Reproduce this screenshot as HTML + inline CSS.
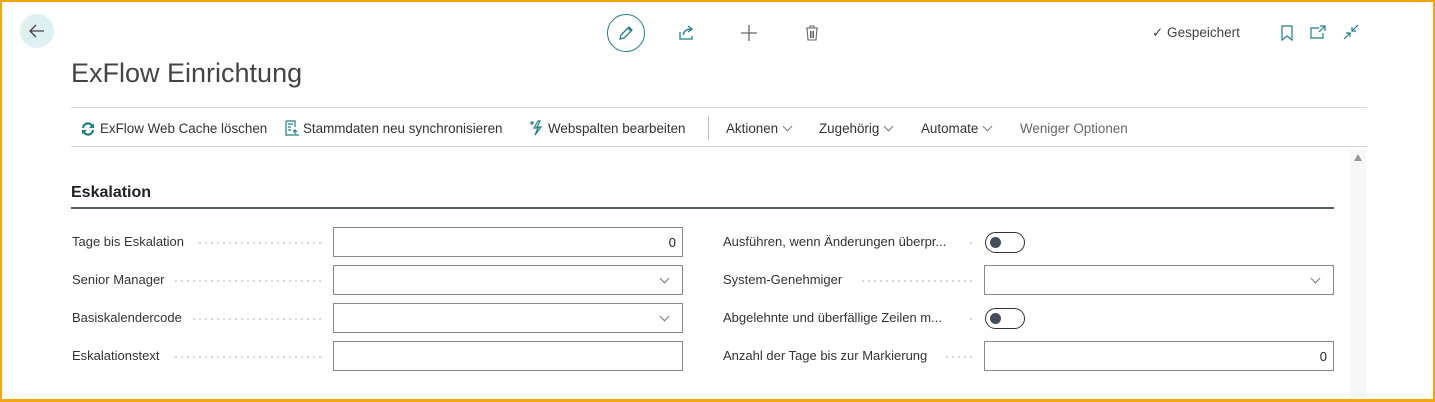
<!DOCTYPE html><html><head><style>
*{margin:0;padding:0;box-sizing:border-box}
body{width:1435px;height:402px;overflow:hidden;background:#fff;font-family:"Liberation Sans",sans-serif;color:#212121;position:relative}
.frame{position:absolute;left:0;top:0;width:1435px;height:402px;border:2px solid #f2a50c;border-bottom-width:3px}
.a{position:absolute;white-space:nowrap}
.lbl{font-size:13px;color:#333}
.dots{position:absolute;height:2px;background:radial-gradient(circle,#c8c8c8 0.8px,transparent 1px) 0 0/6px 2px repeat-x}
.inp{position:absolute;border:1px solid #8a8a8a;height:30px;width:350px;background:#fff;font-size:13px;text-align:right;padding:7px 6px 0 0}
.tog{position:absolute;width:40px;height:21px;border:1px solid #333;border-radius:11px}
.tog:after{content:"";position:absolute;left:4px;top:4px;width:11px;height:11px;border-radius:50%;background:#444d5c}
.tb{font-size:13.4px;color:#333;top:121px}
.chev{display:inline-block;width:7px;height:7px;border-right:1px solid #777;border-bottom:1px solid #777;transform:rotate(45deg);margin:0 4px 3px 6px}
</style></head><body>
<div class="a" style="left:20px;top:14px;width:34px;height:34px;border-radius:50%;background:#dff0f2"></div>
<svg class="a" style="left:28px;top:22px" width="18" height="18" viewBox="0 0 18 18"><path d="M16 9H2M8 3L2 9l6 6" fill="none" stroke="#444" stroke-width="1.3"/></svg>
<div class="a" style="left:607px;top:14px;width:38px;height:38px;border-radius:50%;border:1.5px solid #1f7f86"></div>
<svg class="a" style="left:617px;top:24px" width="18" height="18" viewBox="0 0 18 18"><path d="M3 15l1-4 8-8 3 3-8 8z M11 4l3 3" fill="none" stroke="#1f7f86" stroke-width="1.3"/></svg>
<svg class="a" style="left:678px;top:24px" width="18" height="18" viewBox="0 0 18 18"><path d="M2 8v7h12v-3M5 11c1-4 4-6 8-6M10 2l4 3-4 3" fill="none" stroke="#1f7f86" stroke-width="1.3"/></svg>
<svg class="a" style="left:740px;top:24px" width="18" height="18" viewBox="0 0 18 18"><path d="M9 1v16M1 9h16" stroke="#666" stroke-width="1.3"/></svg>
<svg class="a" style="left:803px;top:24px" width="18" height="18" viewBox="0 0 18 18"><path d="M3 4h12M7 4V2h4v2M4 4l1 12h8l1-12M7.5 7v7M9 7v7M10.5 7v7" fill="none" stroke="#666" stroke-width="1.1"/></svg>
<div class="a" style="left:1152px;top:25px;font-size:13.5px;color:#444">✓ Gespeichert</div>
<svg class="a" style="left:1278px;top:24px" width="18" height="18" viewBox="0 0 18 18"><path d="M4 2h10v14l-5-4-5 4z" fill="none" stroke="#1f7f86" stroke-width="1.2"/></svg>
<svg class="a" style="left:1309px;top:24px" width="18" height="18" viewBox="0 0 18 18"><path d="M10 4H2v10h12V9M11 2h5v5M16 2l-6 6" fill="none" stroke="#1f7f86" stroke-width="1.2"/></svg>
<svg class="a" style="left:1342px;top:23px" width="18" height="18" viewBox="0 0 18 18"><path d="M2 16l6-6M4 10h4v4M16 2l-6 6M10 4v4h4" fill="none" stroke="#1f7f86" stroke-width="1.2"/></svg>
<div class="a" style="left:71px;top:58px;font-size:27px;color:#444;font-weight:300">ExFlow Einrichtung</div>
<div class="a" style="left:71px;top:107px;width:1296px;height:1px;background:#d6d6d6"></div>
<div class="a" style="left:71px;top:146px;width:1296px;height:1px;background:#d6d6d6"></div>
<svg class="a" style="left:80px;top:121px" width="16" height="16" viewBox="0 0 16 16"><path d="M2 7a6 6 0 0 1 11-3l1-2v5h-5l2-2a4 4 0 0 0-7 2zM14 9a6 6 0 0 1-11 3l-1 2V9h5l-2 2a4 4 0 0 0 7-2z" fill="#1f7f86"/></svg>
<div class="a tb" style="left:100px">ExFlow Web Cache löschen</div>
<svg class="a" style="left:284px;top:120px" width="16" height="16" viewBox="0 0 16 16"><path d="M2 1h9v6M2 1v14h8M4 4h5M4 7h3M4 10h3M9 12l2-2 2 2M11 10v5h4" fill="none" stroke="#1f7f86" stroke-width="1.2"/></svg>
<div class="a tb" style="left:303px">Stammdaten neu synchronisieren</div>
<svg class="a" style="left:530px;top:119px" width="14" height="18" viewBox="0 0 14 18"><path d="M8 2L4 9h4l-3 7 6-8H7l3-6zM2 2v4M0 4h4" fill="none" stroke="#1f7f86" stroke-width="1.2"/></svg>
<div class="a tb" style="left:548px">Webspalten bearbeiten</div>
<div class="a" style="left:708px;top:116px;width:1px;height:24px;background:#bbb"></div>
<div class="a tb" style="left:726px">Aktionen<span class="chev"></span></div>
<div class="a tb" style="left:819px">Zugehörig<span class="chev"></span></div>
<div class="a tb" style="left:921px">Automate<span class="chev"></span></div>
<div class="a tb" style="left:1020px;color:#666">Weniger Optionen</div>
<div class="a" style="left:1350px;top:150px;width:16px;height:252px;background:#f7f7f7"></div>
<div class="a" style="left:1354px;top:154px;width:0;height:0;border-left:4px solid transparent;border-right:4px solid transparent;border-bottom:7px solid #999"></div>
<div class="a" style="left:71px;top:184px;font-size:16px;font-weight:bold;color:#222">Eskalation</div>
<div class="a" style="left:71px;top:207px;width:1263px;height:2px;background:#505c6d"></div>

<div class="a lbl" style="left:72px;top:234px">Tage bis Eskalation</div><div class="dots" style="left:197px;top:242px;width:126px"></div>
<div class="inp" style="left:333px;top:227px">0</div>
<div class="a lbl" style="left:72px;top:272px">Senior Manager</div><div class="dots" style="left:173px;top:280px;width:150px"></div>
<div class="inp" style="left:333px;top:265px"><span class="chev" style="margin-right:8px;margin-top:2px;vertical-align:top"></span></div>
<div class="a lbl" style="left:72px;top:310px">Basiskalendercode</div><div class="dots" style="left:191px;top:318px;width:132px"></div>
<div class="inp" style="left:333px;top:303px"><span class="chev" style="margin-right:8px;margin-top:2px;vertical-align:top"></span></div>
<div class="a lbl" style="left:72px;top:348px">Eskalationstext</div><div class="dots" style="left:173px;top:356px;width:150px"></div>
<div class="inp" style="left:333px;top:341px"></div>

<div class="a lbl" style="left:723px;top:234px">Ausführen, wenn Änderungen überpr...</div><div class="dots" style="left:968px;top:242px;width:6px"></div>
<div class="tog" style="left:985px;top:232px"></div>
<div class="a lbl" style="left:723px;top:272px">System-Genehmiger</div><div class="dots" style="left:860px;top:280px;width:114px"></div>
<div class="inp" style="left:984px;top:265px"><span class="chev" style="margin-right:8px;margin-top:2px;vertical-align:top"></span></div>
<div class="a lbl" style="left:723px;top:310px">Abgelehnte und überfällige Zeilen m...</div><div class="dots" style="left:968px;top:318px;width:6px"></div>
<div class="tog" style="left:985px;top:308px"></div>
<div class="a lbl" style="left:723px;top:348px">Anzahl der Tage bis zur Markierung</div><div class="dots" style="left:944px;top:356px;width:30px"></div>
<div class="inp" style="left:984px;top:341px">0</div>
<div class="frame"></div>
</body></html>
